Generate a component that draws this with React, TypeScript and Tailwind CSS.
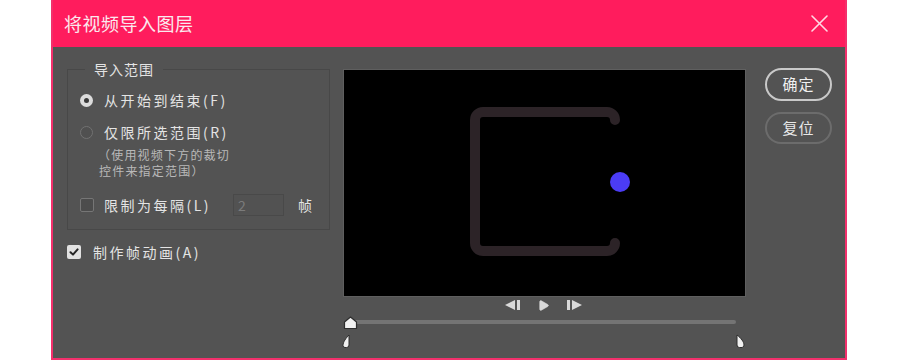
import { Play } from "lucide-react";

const font = { fontFamily: '"Noto Sans CJK SC", "Noto Sans", sans-serif' };

function Radio({ checked }: { checked?: boolean }) {
  if (checked) {
    return (
      <span className="flex h-[13px] w-[13px] shrink-0 items-center justify-center rounded-full bg-[#dcdcdc]">
        <span className="h-[5px] w-[5px] rounded-full bg-[#3a3a3a]" />
      </span>
    );
  }
  return <span className="h-[13px] w-[13px] shrink-0 rounded-full border border-[#727272] bg-[#505050]" />;
}

function Checkbox({ checked }: { checked?: boolean }) {
  if (checked) {
    return (
      <span className="flex h-[14px] w-[14px] shrink-0 items-center justify-center rounded-[2px] bg-[#e2e2e2]">
        <svg width="10" height="10" viewBox="0 0 10 10" fill="none">
          <path d="M1.5 5.2 L4 7.6 L8.6 2.4" stroke="#262626" strokeWidth="2" strokeLinecap="round" strokeLinejoin="round" />
        </svg>
      </span>
    );
  }
  return <span className="h-[14px] w-[14px] shrink-0 rounded-[2px] border border-[#767676] bg-[#4c4c4c]" />;
}

function Preview() {
  return (
    <div className="h-[226px] w-[401px] bg-black outline outline-1 outline-[#5f5f5f]">
      <svg width="401" height="226" viewBox="0 0 401 226">
        <path
          d="M271 50 A8 8 0 0 0 263 42 H139 A8 8 0 0 0 131 50 V173 A8 8 0 0 0 139 181 H263 A8 8 0 0 0 271 173"
          fill="none"
          stroke="#2c2327"
          strokeWidth="10"
          strokeLinecap="round"
        />
        <circle cx="276" cy="112" r="10" fill="#4b3cf5" />
      </svg>
    </div>
  );
}

function Transport() {
  return (
    <div className="mt-[3px] flex h-[12px] items-center justify-center gap-[17px] pr-[2px]">
      <svg width="15" height="10" viewBox="0 0 15 10">
        <path d="M0 5 L10 0 V10 Z" fill="#d9d9d9" />
        <rect x="12" y="0" width="3" height="10" fill="#d9d9d9" />
      </svg>
      <Play size={13} className="fill-[#d9d9d9] text-[#d9d9d9]" strokeWidth={1} />
      <svg width="15" height="10" viewBox="0 0 15 10">
        <rect x="0" y="0" width="3" height="10" fill="#d9d9d9" />
        <path d="M5 0 L15 5 L5 10 Z" fill="#d9d9d9" />
      </svg>
    </div>
  );
}

function Slider() {
  return (
    <div className="relative mt-[2px] h-[40px] w-[401px]">
      <div className="absolute left-[8px] top-[7px] h-[4px] w-[384px] rounded-full bg-[#747474]" />
      <svg className="absolute left-[-1px] top-[3px]" width="15" height="14" viewBox="0 0 15 14">
        <path d="M7.5 1 L13.5 6 V12.5 H1.5 V6 Z" fill="#f2f2f2" stroke="#2e2e2e" strokeWidth="1.2" strokeLinejoin="round" />
      </svg>
      <svg className="absolute left-[-2px] top-[21px]" width="8" height="14" viewBox="0 0 8 14">
        <path d="M7 1 V11 A2.5 2.5 0 0 1 4.5 13.5 H3 A2 2 0 0 1 1 11.5 C1 8 4 4 7 1 Z" fill="#f0f0f0" stroke="#2e2e2e" strokeWidth="1" />
      </svg>
      <svg className="absolute left-[392px] top-[21px]" width="9" height="14" viewBox="0 0 9 14">
        <path d="M1 1 V11 A2.5 2.5 0 0 0 3.5 13.5 H5 A2.5 2.5 0 0 0 8 11 C8 8 5 4 1 1 Z" fill="#f0f0f0" stroke="#2e2e2e" strokeWidth="1" />
      </svg>
    </div>
  );
}

export default function App() {
  return (
    <div className="h-[360px] w-[899px] overflow-hidden bg-white" style={font}>
      <div className="ml-[51px] flex h-[360px] w-[796px] flex-col border-x-2 border-b-2 border-[#f2306c] bg-[#535353]">
        {/* title bar */}
        <div className="flex h-[47px] shrink-0 items-center justify-between bg-[#ff1c5d] pl-[11px] pr-[17px]">
          <span className="text-[18px] tracking-[0.5px] text-[#fbe9ee]">将视频导入图层</span>
          <svg width="17" height="17" viewBox="0 0 17 17">
            <path d="M1 1 L16 16 M16 1 L1 16" stroke="#ffd9e3" strokeWidth="1.6" strokeLinecap="round" />
          </svg>
        </div>

        <div className="flex items-start pl-[14px] pr-[12px]">
          {/* left column */}
          <div className="mt-[22px] w-[263px]">
            <div className="relative h-[161px] border border-[#484848] pl-[12px] text-[14px] text-[#e4e4e4]">
              <span className="absolute left-[17px] top-[-11px] bg-[#535353] px-[9px] leading-[20px] tracking-[1px]">
                导入范围
              </span>
              <div className="mt-[20px] flex h-[20px] items-center gap-[11px]">
                <Radio checked />
                <span className="tracking-[2.5px]">从开始到结束(F)</span>
              </div>
              <div className="mt-[12px] flex h-[20px] items-center gap-[11px]">
                <Radio />
                <span className="tracking-[2.5px]">仅限所选范围(R)</span>
              </div>
              <div className="mt-[5px] pl-[22px] text-[12px] leading-[16px] tracking-[1.2px] text-[#b9b9b9]">
                <div className="-ml-[4px]">（使用视频下方的裁切</div>
                <div className="-ml-[3px]">控件来指定范围）</div>
              </div>
              <div className="mt-[15px] flex h-[22px] items-center">
                <Checkbox />
                <span className="ml-[10px] w-[129px] tracking-[2.5px]">限制为每隔(L)</span>
                <div className="flex h-[22px] w-[51px] items-center border border-[#494949] bg-[#525252] pl-[4px] text-[14px] text-[#7b7b7b]">
                  2
                </div>
                <span className="ml-[14px]">帧</span>
              </div>
            </div>
            <div className="mt-[12px] flex h-[20px] items-center text-[14px] text-[#e4e4e4]">
              <Checkbox checked />
              <span className="ml-[12px] tracking-[2.5px]">制作帧动画(A)</span>
            </div>
          </div>

          {/* preview */}
          <div className="ml-[14px] mt-[23px] flex w-[401px] flex-col">
            <Preview />
            <Transport />
            <Slider />
          </div>

          {/* buttons */}
          <div className="ml-[20px] mt-[21px] flex flex-col gap-[11px]">
            <button className="h-[33px] w-[67px] rounded-full border-2 border-[#c9c9c9] text-[15px] tracking-[1px] text-[#f0f0f0]">
              确定
            </button>
            <button className="h-[32px] w-[67px] rounded-full border-2 border-[#6c6c6c] text-[15px] tracking-[1px] text-[#e8e8e8]">
              复位
            </button>
          </div>
        </div>
      </div>
    </div>
  );
}
